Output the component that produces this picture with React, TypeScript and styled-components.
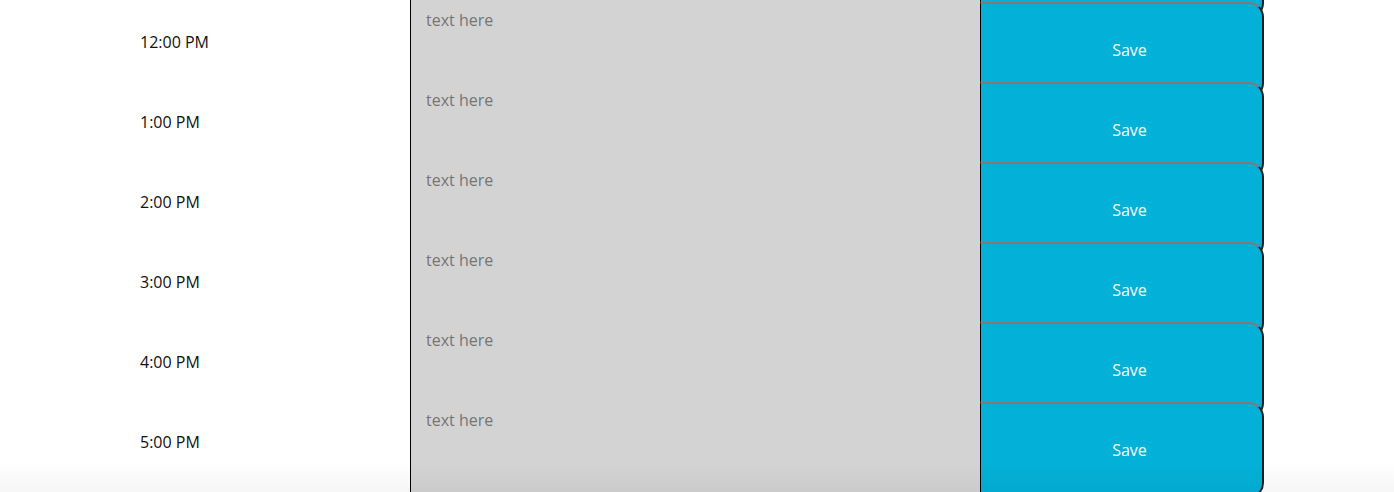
import React from "react";
import styled, { createGlobalStyle } from "styled-components";

const Global = createGlobalStyle`
  html, body { margin: 0; padding: 0; background: #ffffff; overflow: hidden; }
  body { font-family: "Open Sans", "Liberation Sans", sans-serif; }
`;

const Page = styled.div`
  position: relative;
  height: 492px;
  overflow: hidden;
`;

const Schedule = styled.div`
  margin-top: -78px;
  display: flex;
  flex-direction: column;
`;

const Row = styled.div`
  display: grid;
  grid-template-columns: 410px 570px 284px;
  height: 80px;
  align-items: start;
`;

const Hour = styled.div`
  height: 80px;
  display: flex;
  align-items: center;
  padding-left: 140px;
  box-sizing: border-box;
  font-size: 16px;
  color: #111;
`;

const Note = styled.textarea`
  height: 96px;
  box-sizing: border-box;
  margin: 0;
  background: #d3d3d3;
  border: none;
  border-left: 1px solid #000;
  resize: none;
  padding: 7px 15px;
  font-family: "Open Sans", "Liberation Sans", sans-serif;
  font-size: 16px;
  color: #000;
  outline: none;
  &::placeholder { color: #757575; }
`;

const SaveBtn = styled.button`
  height: 96px;
  box-sizing: border-box;
  margin: 0;
  background: #02b0d8;
  color: #fff;
  font-family: "Open Sans", "Liberation Sans", sans-serif;
  font-size: 16px;
  padding: 0 0 1px 16px;
  border-style: solid;
  border-width: 2px 2px 2px 1px;
  border-color: #7b7b7b #1e1e1e #1e1e1e #000;
  border-top-right-radius: 15px;
  border-bottom-right-radius: 15px;
  cursor: pointer;
  position: relative;
`;

const Fade = styled.div`
  position: absolute;
  left: 0;
  right: 0;
  bottom: 0;
  height: 30px;
  pointer-events: none;
  background: linear-gradient(to bottom, rgba(0,0,0,0), rgba(0,0,0,0.04));
`;

const hours = ["11:00 AM", "12:00 PM", "1:00 PM", "2:00 PM", "3:00 PM", "4:00 PM", "5:00 PM"];

export default function App() {
  return (
    <Page>
      <Global />
      <Schedule>
        {hours.map((h) => (
          <Row key={h}>
            <Hour>{h}</Hour>
            <Note placeholder="text here" />
            <SaveBtn>Save</SaveBtn>
          </Row>
        ))}
      </Schedule>
      <Fade />
    </Page>
  );
}
